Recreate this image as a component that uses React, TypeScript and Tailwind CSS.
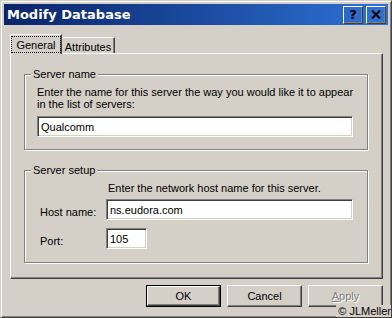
import type { ReactNode } from "react";

// classic 3D edges
const raised =
  "border border-t-white border-l-white border-r-[#404040] border-b-[#404040] shadow-[inset_-1px_-1px_0_#808080]";
const sunken =
  "border border-t-[#808080] border-l-[#808080] border-r-white border-b-white bg-white shadow-[inset_1px_1px_0_#404040,inset_-1px_-1px_0_#d4d0c8]";

function TextBox({ value, className = "" }: { value: string; className?: string }) {
  return (
    <div className={`flex h-[21px] items-center pl-[3px] leading-[12px] ${sunken} ${className}`}>
      {value}
    </div>
  );
}

function Group({ title, children }: { title: string; children: ReactNode }) {
  return (
    <fieldset className="border border-[#808080] shadow-[1px_1px_0_#fff,inset_1px_1px_0_#fff]">
      <legend className="ml-[6px] bg-[#d4d0c8] px-[2px] leading-[14px]">{title}</legend>
      {children}
    </fieldset>
  );
}

function DlgButton({ children, def, disabled }: { children: ReactNode; def?: boolean; disabled?: boolean }) {
  const label = (
    <span className={disabled ? "text-[#808080] [text-shadow:1px_1px_0_#fff]" : ""}>{children}</span>
  );
  if (def) {
    return (
      <div className="h-[22px] w-[75px] border border-black">
        <div className={`flex h-full w-full items-center justify-center ${raised}`}>{label}</div>
      </div>
    );
  }
  return (
    <div className={`flex h-[22px] w-[75px] items-center justify-center ${raised}`}>{label}</div>
  );
}

export default function App() {
  return (
    <div className="relative flex h-[318px] w-[392px] flex-col border border-t-[#d4d0c8] border-l-[#d4d0c8] border-r-[#404040] border-b-[#404040] bg-[#d4d0c8] p-[3px] font-['Liberation_Sans',Arial,sans-serif] text-[11px] leading-[12px] text-black shadow-[inset_1px_1px_0_#fff,inset_-1px_-1px_0_#808080]">
      {/* title bar */}
      <div className="flex h-[21px] shrink-0 items-center justify-between bg-linear-to-r from-[#0a246a] to-[#2f73d6] pr-[2px] pl-[3px]">
        <span className="font-['DejaVu_Sans',sans-serif] text-[13px] leading-[15px] font-bold text-white">
          Modify Database
        </span>
        <div className="flex gap-[3px]">
          <div className={`flex h-[18px] w-[20px] items-center justify-center ${raised}`}>
            <span className="font-['DejaVu_Sans',sans-serif] text-[13px] leading-[13px] font-bold">?</span>
          </div>
          <div className={`flex h-[18px] w-[20px] items-center justify-center ${raised}`}>
            <svg width="10" height="9" viewBox="0 0 10 9">
              <path d="M1 0.5L9 8.5M9 0.5L1 8.5" stroke="#000" strokeWidth="2" />
            </svg>
          </div>
        </div>
      </div>

      {/* body */}
      <div className="flex flex-1 flex-col pt-[9px] pr-[5px] pl-[6px]">
        {/* tabs */}
        <div className="flex h-[19px] items-end">
          <div className="relative z-10 -mb-px h-[20px] w-[52px] rounded-tl-[2px] border-t border-l border-r border-t-white border-l-white border-r-[#404040] bg-[#d4d0c8] px-[1px] pt-[2px] shadow-[inset_-1px_0_0_#808080]">
            <div className="flex h-[15px] items-center justify-center outline-1 outline-black outline-dotted">
              General
            </div>
          </div>
          <div className="flex h-[16px] w-[53px] items-center justify-center rounded-tl-[2px] border-t border-r border-t-white border-r-[#404040] pt-[2px] shadow-[inset_-1px_0_0_#808080]">
            Attributes
          </div>
        </div>

        {/* tab page */}
        <div className={`h-[226px] pt-[13px] pr-[14px] pl-[13px] ${raised}`}>
          <Group title="Server name">
            <div className="pt-[5px] pr-[14px] pb-[12px] pl-[12px]">
              <div className="whitespace-nowrap">Enter the name for this server the way you would like it to appear</div>
              <div className="whitespace-nowrap">in the list of servers:</div>
              <TextBox value="Qualcomm" className="mt-[6px] w-full" />
            </div>
          </Group>

          <div className="mt-[13px]">
            <Group title="Server setup">
              <div className="grid grid-cols-[69px_1fr] pt-[5px] pr-[14px] pb-[13px] pl-[12px]">
                <div />
                <div className="pl-[2px] whitespace-nowrap">Enter the network host name for this server.</div>
                <div className="mt-[5px] pt-[7px] pl-[3px]">Host name:</div>
                <TextBox value="ns.eudora.com" className="mt-[5px] w-full" />
                <div className="mt-[8px] pt-[7px] pl-[3px]">Port:</div>
                <TextBox value="105" className="mt-[8px] w-[41px]" />
              </div>
            </Group>
          </div>
        </div>

        {/* buttons */}
        <div className="mt-[6px] flex justify-end gap-[6px]">
          <DlgButton def>OK</DlgButton>
          <DlgButton>Cancel</DlgButton>
          <DlgButton disabled>
            <span className="underline">A</span>pply
          </DlgButton>
        </div>
      </div>

      <span className="absolute right-0 bottom-0 bg-[#d4d0c8] pl-[2px] text-[11px] leading-[12px]">© JLMeller</span>
    </div>
  );
}
